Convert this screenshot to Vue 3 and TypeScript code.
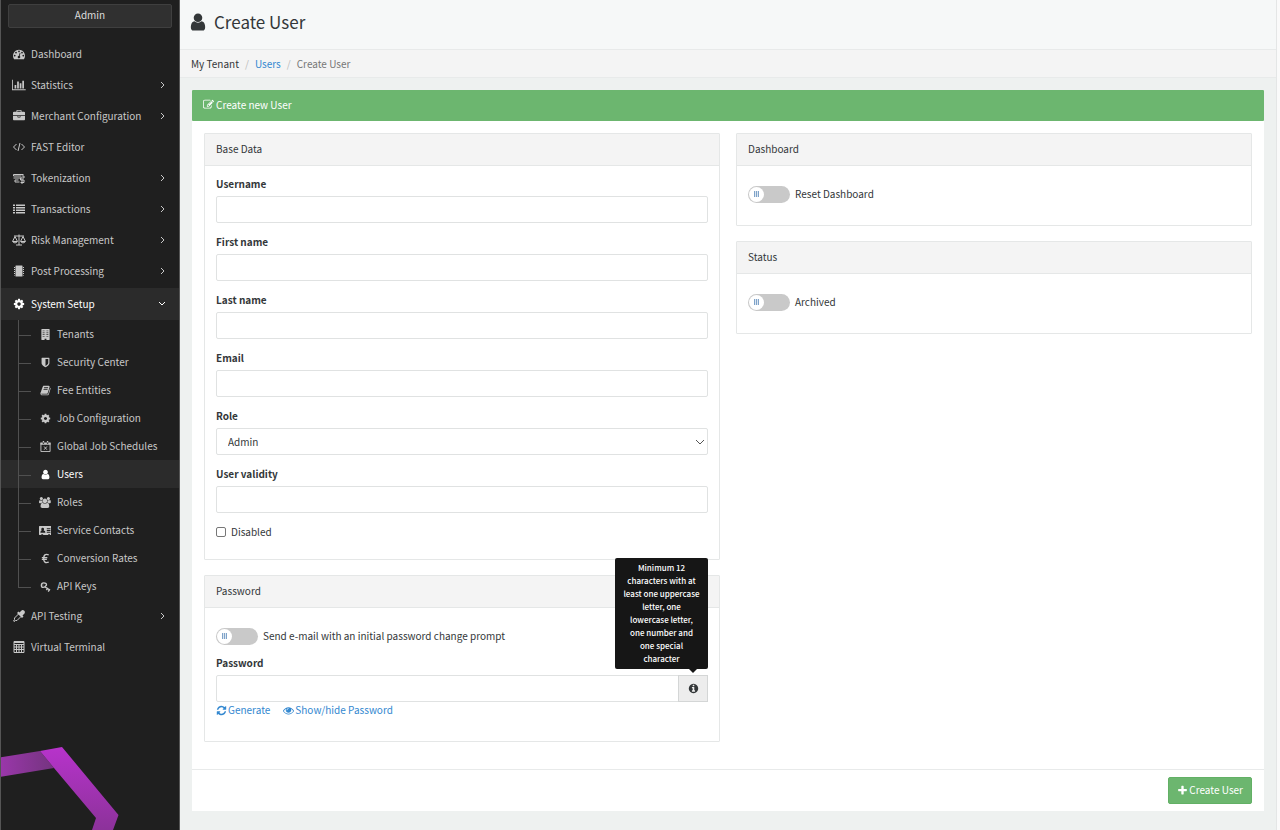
<script setup lang="ts">
import { h, ref } from 'vue'

interface Icon {
  box: string
  fill?: string
  stroke?: string
  width?: number
}

interface NavItem {
  label: string
  icon: string
  expandable?: boolean
}

const icons: Record<string, Icon> = {
  gauge: {
    box: '0 0 1792 1792',
    fill: 'M384 1152q0-53-37.5-90.5t-90.5-37.5-90.5 37.5-37.5 90.5 37.5 90.5 90.5 37.5 90.5-37.5 37.5-90.5zm192-448q0-53-37.5-90.5t-90.5-37.5-90.5 37.5-37.5 90.5 37.5 90.5 90.5 37.5 90.5-37.5 37.5-90.5zm428 481l101-382q6-26-7.5-48.5t-38.5-29.5-48 6.5-30 39.5l-101 382q-60 5-107 43.5t-63 98.5q-20 77 20 146t117 89 146-20 89-117q16-60-6-117t-72-91zm660-33q0-53-37.5-90.5t-90.5-37.5-90.5 37.5-37.5 90.5 37.5 90.5 90.5 37.5 90.5-37.5 37.5-90.5zm-640-640q0-53-37.5-90.5t-90.5-37.5-90.5 37.5-37.5 90.5 37.5 90.5 90.5 37.5 90.5-37.5 37.5-90.5zm448 192q0-53-37.5-90.5t-90.5-37.5-90.5 37.5-37.5 90.5 37.5 90.5 90.5 37.5 90.5-37.5 37.5-90.5zm320 448q0 261-141 483-19 29-54 29h-1402q-35 0-54-29-141-221-141-483 0-182 71-348t191-286 286-191 348-71 348 71 286 191 191 286 71 348z',
  },
  chart: {
    box: '0 0 2048 1792',
    fill: 'M640 896v512h-256v-512h256zm384-512v1024h-256v-1024h256zm1024 1152v128h-2048v-1536h128v1408h1920zm-640-896v768h-256v-768h256zm384-384v1152h-256v-1152h256z',
  },
  briefcase: {
    box: '0 0 1792 1792',
    fill: 'M640 256h512v-128h-512v128zm1152 640v480q0 66-47 113t-113 47h-1472q-66 0-113-47t-47-113v-480h672v160q0 26 19 45t45 19h320q26 0 45-19t19-45v-160h672zm-768 0v128h-256v-128h256zm768-480v384h-1792v-384q0-66 47-113t113-47h352v-160q0-40 28-68t68-28h576q40 0 68 28t28 68v160h352q66 0 113 47t47 113z',
  },
  code: { box: '0 0 24 24', stroke: 'M7 6L1 12L7 18M17 6l6 6L17 18M14 4l-4 16', width: 2 },
  token: {
    box: '0 0 24 24',
    stroke: 'M1 5H21M1 5v3H17M1 12H17M4 16H11M4 16v4H13M18 8h4v4h-7v4h7v5h-7M18 14v10',
    width: 2,
  },
  list: {
    box: '0 0 24 24',
    fill: 'M0 3h4v3H0zM0 8h4v3H0zM0 13h4v3H0zM0 18h4v3H0zM6 3h18v3H6zM6 8h18v3H6zM6 13h18v3H6zM6 18h18v3H6z',
  },
  scale: {
    box: '0 0 28 24',
    stroke: 'M4 4H24M14 1V22M8 22H20M6 5L1 15H11L6 5M22 5l-5 10h10L22 5M2 16q4 4 8 0M18 16q4 4 8 0',
    width: 2,
  },
  chip: {
    box: '0 0 24 24',
    fill: 'M6 1h12q1 0 1 1v20q0 1-1 1H6q-1 0-1-1V2q0-1 1-1zM2 4h2v2H2zM2 8h2v2H2zM2 12h2v2H2zM2 16h2v2H2zM2 20h2v1H2zM20 4h2v2h-2zM20 8h2v2h-2zM20 12h2v2h-2zM20 16h2v2h-2zM20 20h2v1h-2z',
  },
  cog: {
    box: '0 0 1792 1792',
    fill: 'M1152 896q0-106-75-181t-181-75-181 75-75 181 75 181 181 75 181-75 75-181zm512-109v222q0 12-8 23t-20 13l-185 28q-19 54-39 91 35 50 107 138 10 12 10 25t-9 23q-27 37-99 108t-94 71q-12 0-26-9l-138-108q-44 23-91 38-16 136-29 186-7 28-36 28h-222q-14 0-24.5-8.5t-11.5-21.5l-28-184q-49-16-90-37l-141 107q-10 9-25 9-14 0-25-11-126-114-165-168-7-10-7-23 0-12 8-23 15-21 51-66.5t54-70.5q-27-50-41-99l-183-27q-13-2-21-12.5t-8-23.5v-222q0-12 8-23t19-13l186-28q14-46 39-92-40-57-107-138-10-12-10-24 0-10 9-23 26-36 98.5-107.5t94.5-71.5q13 0 26 10l138 107q44-23 91-38 16-136 29-186 7-28 36-28h222q14 0 24.5 8.5t11.5 21.5l28 184q49 16 90 37l142-107q9-9 24-9 13 0 25 10 129 119 165 170 7 8 7 22 0 12-8 23-15 21-51 66.5t-54 70.5q26 50 41 98l183 28q13 2 21 12.5t8 23.5z',
  },
  building: {
    box: '0 0 24 24',
    fill: 'M4 0h16q1 0 1 1v22q0 1-1 1h-6v-3h-4v3H4q-1 0-1-1V1q0-1 1-1zM6 3v2h2V3zM10 3v2h1V3zM13 3v2h1V3zM16 3v2h2V3zM6 7v2h2V7zM10 7v2h1V7zM13 7v2h1V7zM16 7v2h2V7zM6 11v2h2v-2zM10 11v2h1v-2zM13 11v2h1v-2zM16 11v2h2v-2zM6 15v2h2v-2zM10 15v2h1v-2zM13 15v2h1v-2zM16 15v2h2v-2z',
  },
  shield: {
    box: '0 0 1792 1792',
    fill: 'M1344 960v-640h-448v1137q119-63 213-137 235-184 235-360zm192-768v768q0 86-33.5 170.5t-83 150-118 127.5-126.5 103-121 77.5-89.5 49.5-42.5 20q-12 6-26 6t-26-6q-16-7-42.5-20t-89.5-49.5-121-77.5-126.5-103-118-127.5-83-150-33.5-170.5v-768q0-26 19-45t45-19h1152q26 0 45 19t19 45z',
  },
  book: {
    box: '0 0 1792 1792',
    fill: 'M1703 478q40 57 18 129l-275 906q-19 64-76.5 107.5t-122.5 43.5h-923q-77 0-148.5-53.5t-99.5-131.5q-24-67-2-127 0-4 3-27t4-37q1-8-3-21.5t-3-19.5q2-11 8-21t16.5-23.5 16.5-23.5q23-38 45-91.5t30-91.5q3-10 .5-30t-.5-28q3-11 17-28t17-23q21-36 42-92t25-90q1-9-2.5-32t.5-28q4-13 22-30.5t22-22.5q19-26 42.5-84.5t27.5-96.5q1-8-3-25.5t-2-26.5q2-8 9-18t18-23 17-21q8-12 16.5-30.5t15-35 16-36 19.5-32 26.5-23.5 36-11.5 47.5 5.5l-1 3q38-9 51-9h761q74 0 114 56t18 130l-274 906q-36 119-71.5 153.5t-128.5 34.5h-869q-27 0-38 15-11 16-1 43 24 70 144 70h923q29 0 56-15.5t35-41.5l300-987q7-22 5-57 38 15 59 43zm-1064 2q-4 13 2 22.5t20 9.5h608q13 0 25.5-9.5t16.5-22.5l21-64q4-13-2-22.5t-20-9.5h-608q-13 0-25.5 9.5t-16.5 22.5zm-83 256q-4 13 2 22.5t20 9.5h608q13 0 25.5-9.5t16.5-22.5l21-64q4-13-2-22.5t-20-9.5h-608q-13 0-25.5 9.5t-16.5 22.5z',
  },
  calendar: {
    box: '0 0 24 24',
    fill: 'M6 0h3v6H6zM15 0h3v6h-3zM1 3h22v5H1z',
    stroke: 'M2 4V23H22V4M9 12l6 7M15 12l-6 7',
    width: 2,
  },
  user: {
    box: '0 0 1792 1792',
    fill: 'M1536 1399q0 109-62.5 187t-150.5 78h-854q-88 0-150.5-78t-62.5-187q0-85 8.5-160.5t31.5-152 58.5-131 94-89 134.5-34.5q131 128 313 128t313-128q76 0 134.5 34.5t94 89 58.5 131 31.5 152 8.5 160.5zm-256-887q0 159-112.5 271.5t-271.5 112.5-271.5-112.5-112.5-271.5 112.5-271.5 271.5-112.5 271.5 112.5 112.5 271.5z',
  },
  users: {
    box: '0 0 1920 1792',
    fill: 'M593 896q-162 5-265 128h-134q-82 0-138-40.5t-56-118.5q0-353 124-353 6 0 43.5 21t97.5 42.5 119 21.5q67 0 133-23-5 37-5 66 0 159 93 283zm1071 637q0 120-73 189.5t-194 69.5h-874q-121 0-194-69.5t-73-189.5q0-53 3.5-103.5t14-109 26.5-108.5 43-97.5 62-81 85.5-53.5 111.5-20q10 0 43 21.5t73 48 107 48 135 21.5 135-21.5 107-48 73-48 43-21.5q61 0 111.5 20t85.5 53.5 62 81 43 97.5 26.5 108.5 14 109 3.5 103.5zm-1024-1277q0 106-75 181t-181 75-181-75-75-181 75-181 181-75 181 75 75 181zm704 384q0 159-112.5 271.5t-271.5 112.5-271.5-112.5-112.5-271.5 112.5-271.5 271.5-112.5 271.5 112.5 112.5 271.5zm576 225q0 78-56 118.5t-138 40.5h-134q-103-123-265-128 93-124 93-283 0-29-5-66 66 23 133 23 59 0 119-21.5t97.5-42.5 43.5-21q124 0 124 353zm-128-609q0 106-75 181t-181 75-181-75-75-181 75-181 181-75 181 75 75 181z',
  },
  card: {
    box: '0 0 28 24',
    fill: 'M1 2h26q1 0 1 1v18q0 1-1 1h-3v-2h-4v2H9v-2H5v2H1q-1 0-1-1V3q0-1 1-1zM8 6a3 3 0 0 0-3 3q0 2 1 3Q3 12 3 17h11q0-5-4-5Q11 11 11 9a3 3 0 0 0-3-3zM17 7v2h8V7zM17 11v2h8v-2zM17 15v2h8v-2z',
  },
  euro: { box: '0 0 24 24', stroke: 'M19 4Q8 0 8 12t11 8M4 10H16M4 14H15', width: 3 },
  key: {
    box: '0 0 24 24',
    stroke: 'M8 4a5 5 0 0 0-5 5q0 5 4 5t7-5q1-5-6-5zM11 13l11 7M6 9h1M17 15l-3 5M21 18l-3 5',
    width: 3,
  },
  dropper: {
    box: '0 0 24 24',
    fill: 'M16 2q3-3 6-1t1 6l-4 4 2 2-3 3L8 6l3-3 2 2z',
    stroke: 'M11 8l-8 8v3l-2 3 1 1 3-2h3l8-8',
    width: 2,
  },
  calculator: {
    box: '0 0 24 24',
    stroke: 'M2 1H22V23H2zM2 7H22M2 12H22M2 17H22M7 7V23M12 7V23M17 7V23M2 3H22',
    width: 2,
  },
  pencil: {
    box: '0 0 1792 1792',
    fill: 'M888 1184l116-116-152-152-116 116v56h96v96h56zm440-720q-16-16-33 1l-350 350q-17 17-1 33t33-1l350-350q17-17 1-33zm80 594v190q0 119-84.5 203.5t-203.5 84.5h-832q-119 0-203.5-84.5t-84.5-203.5v-832q0-119 84.5-203.5t203.5-84.5h832q63 0 117 25 15 7 18 23 3 17-9 29l-49 49q-14 14-32 8-23-6-45-6h-832q-66 0-113 47t-47 113v832q0 66 47 113t113 47h832q66 0 113-47t47-113v-126q0-13 9-22l64-64q15-15 35-7t20 29zm-96-738l288 288-672 672h-288v-288zm444 132l-92 92-288-288 92-92q28-28 68-28t68 28l152 152q28 28 28 68t-28 68z',
  },
  refresh: {
    box: '0 0 1792 1792',
    fill: 'M1639 1056q0 5-1 7-64 268-268 434.5t-478 166.5q-146 0-282.5-55t-243.5-157l-129 129q-19 19-45 19t-45-19-19-45v-448q0-26 19-45t45-19h448q26 0 45 19t19 45-19 45l-137 137q71 66 161 102t187 36q134 0 250-65t186-179q11-17 53-117 8-23 30-23h192q13 0 22.5 9.5t9.5 22.5zm25-800v448q0 26-19 45t-45 19h-448q-26 0-45-19t-19-45 19-45l138-138q-148-137-349-137-134 0-250 65t-186 179q-11 17-53 117-8 23-30 23h-199q-13 0-22.5-9.5t-9.5-22.5v-7q65-268 270-434.5t480-166.5q146 0 284 55.5t245 156.5l130-129q19-19 45-19t45 19 19 45z',
  },
  eye: {
    box: '0 0 1792 1792',
    fill: 'M1664 960q-152-236-381-353 61 104 61 225 0 185-131.5 316.5t-316.5 131.5-316.5-131.5-131.5-316.5q0-121 61-225-229 117-381 353 133 205 333.5 326.5t434.5 121.5 434.5-121.5 333.5-326.5zm-720-384q0-20-14-34t-34-14q-125 0-214.5 89.5t-89.5 214.5q0 20 14 34t34 14 34-14 14-34q0-86 61-147t147-61q20 0 34-14t14-34zm848 384q0 34-20 69-140 230-376.5 368.5t-499.5 138.5-499.5-139-376.5-368q-20-35-20-69t20-69q140-229 376.5-368t499.5-139 499.5 139 376.5 368q20 35 20 69z',
  },
  info: {
    box: '0 0 1792 1792',
    fill: 'M1152 1376v-160q0-14-9-23t-23-9h-96v-512q0-14-9-23t-23-9h-320q-14 0-23 9t-9 23v160q0 14 9 23t23 9h96v320h-96q-14 0-23 9t-9 23v160q0 14 9 23t23 9h448q14 0 23-9t9-23zm-128-896v-160q0-14-9-23t-23-9h-192q-14 0-23 9t-9 23v160q0 14 9 23t23 9h192q14 0 23-9t9-23zm640 416q0 209-103 385.5t-279.5 279.5-385.5 103-385.5-103-279.5-279.5-103-385.5 103-385.5 279.5-279.5 385.5-103 385.5 103 279.5 279.5 103 385.5z',
  },
  plus: {
    box: '0 0 1792 1792',
    fill: 'M1600 736v192q0 40-28 68t-68 28h-416v416q0 40-28 68t-68 28h-192q-40 0-68-28t-28-68v-416h-416q-40 0-68-28t-28-68v-192q0-40 28-68t68-28h416v-416q0-40 28-68t68-28h192q40 0 68 28t28 68v416h416q40 0 68 28t28 68z',
  },
}

const topNav: NavItem[] = [
  { label: 'Dashboard', icon: 'gauge' },
  { label: 'Statistics', icon: 'chart', expandable: true },
  { label: 'Merchant Configuration', icon: 'briefcase', expandable: true },
  { label: 'FAST Editor', icon: 'code' },
  { label: 'Tokenization', icon: 'token', expandable: true },
  { label: 'Transactions', icon: 'list', expandable: true },
  { label: 'Risk Management', icon: 'scale', expandable: true },
  { label: 'Post Processing', icon: 'chip', expandable: true },
]

const setupNav: NavItem[] = [
  { label: 'Tenants', icon: 'building' },
  { label: 'Security Center', icon: 'shield' },
  { label: 'Fee Entities', icon: 'book' },
  { label: 'Job Configuration', icon: 'cog' },
  { label: 'Global Job Schedules', icon: 'calendar' },
  { label: 'Users', icon: 'user' },
  { label: 'Roles', icon: 'users' },
  { label: 'Service Contacts', icon: 'card' },
  { label: 'Conversion Rates', icon: 'euro' },
  { label: 'API Keys', icon: 'key' },
]

const bottomNav: NavItem[] = [
  { label: 'API Testing', icon: 'dropper', expandable: true },
  { label: 'Virtual Terminal', icon: 'calculator' },
]

const textFields = ref([
  { id: 'username', label: 'Username', value: '' },
  { id: 'first-name', label: 'First name', value: '' },
  { id: 'last-name', label: 'Last name', value: '' },
  { id: 'email', label: 'Email', value: '' },
])
const role = ref('Admin')
const validity = ref('')
const disabled = ref(false)
const sendMail = ref(false)
const resetDashboard = ref(false)
const archived = ref(false)
const password = ref('')
const showPassword = ref(false)

function generate() {
  password.value = Math.random().toString(36).slice(2, 14)
}

const Glyph = (props: { name: string }) => {
  const icon = icons[props.name]
  return h('svg', { viewBox: icon.box, class: 'glyph', 'aria-hidden': 'true' }, [
    icon.fill ? h('path', { d: icon.fill, fill: 'currentColor', 'fill-rule': 'evenodd' }) : null,
    icon.stroke
      ? h('path', { d: icon.stroke, fill: 'none', stroke: 'currentColor', 'stroke-width': icon.width })
      : null,
  ])
}
Glyph.props = ['name']
</script>

<template>
  <div class="app">
    <aside class="sidebar">
      <button class="account" type="button">Admin</button>
      <nav aria-label="Main">
        <ul class="menu">
          <li v-for="item in topNav" :key="item.label">
            <a href="#" class="link">
              <span class="icon"><Glyph :name="item.icon" /></span>
              <span class="text">{{ item.label }}</span>
              <svg v-if="item.expandable" class="chevron" viewBox="0 0 6 6"><path d="M2 0L5 3L2 6" /></svg>
            </a>
          </li>
          <li class="group">
            <a href="#" class="link open">
              <span class="icon"><Glyph name="cog" /></span>
              <span class="text">System Setup</span>
              <svg class="chevron" viewBox="0 0 6 6"><path d="M0 1L3 4L6 1" /></svg>
            </a>
            <ul class="submenu">
              <li v-for="item in setupNav" :key="item.label">
                <a href="#" class="sublink" :class="{ active: item.label === 'Users' }">
                  <span class="icon"><Glyph :name="item.icon" /></span>
                  <span class="text">{{ item.label }}</span>
                </a>
              </li>
            </ul>
          </li>
          <li v-for="item in bottomNav" :key="item.label">
            <a href="#" class="link">
              <span class="icon"><Glyph :name="item.icon" /></span>
              <span class="text">{{ item.label }}</span>
              <svg v-if="item.expandable" class="chevron" viewBox="0 0 6 6"><path d="M2 0L5 3L2 6" /></svg>
            </a>
          </li>
        </ul>
      </nav>
      <svg class="brand" viewBox="1 0 118 84" aria-hidden="true">
        <defs>
          <linearGradient id="band" x1="0" y1="0" x2="1" y2="0">
            <stop offset="0" stop-color="#9a37aa" />
            <stop offset="1" stop-color="#74347f" />
          </linearGradient>
          <linearGradient id="edge" x1="0" y1="0" x2="0" y2="1">
            <stop offset="0" stop-color="#b733cb" />
            <stop offset="1" stop-color="#8c329a" />
          </linearGradient>
        </defs>
        <path d="M0 11.5L40 5L54 22L0 31z" fill="url(#band)" />
        <path d="M40 5L62 1L118.500 69L113 84H92L96 72L54 22z" fill="url(#edge)" />
      </svg>
    </aside>

    <main class="main">
      <header class="title-bar">
        <Glyph name="user" />
        <h1>Create User</h1>
      </header>
      <nav class="crumbs" aria-label="Breadcrumb">
        <span class="tenant">My Tenant</span>
        <span class="slash">/</span>
        <a href="#">Users</a>
        <span class="slash">/</span>
        <span class="current">Create User</span>
      </nav>

      <form class="panel" @submit.prevent>
        <h2 class="panel-title"><Glyph name="pencil" />Create new User</h2>
        <div class="columns">
          <div class="column">
            <section class="card">
              <h3>Base Data</h3>
              <div class="card-body">
                <div v-for="field in textFields" :key="field.id" class="field">
                  <label :for="field.id">{{ field.label }}</label>
                  <input :id="field.id" v-model="field.value" type="text" />
                </div>
                <div class="field">
                  <label for="role">Role</label>
                  <div class="select">
                    <select id="role" v-model="role">
                      <option>Admin</option>
                    </select>
                    <svg viewBox="0 0 10 6" aria-hidden="true"><path d="M1 1l4 4l4-4" /></svg>
                  </div>
                </div>
                <div class="field">
                  <label for="validity">User validity</label>
                  <input id="validity" v-model="validity" type="text" />
                </div>
                <label class="check"><input v-model="disabled" type="checkbox" />Disabled</label>
              </div>
            </section>

            <section class="card">
              <h3>Password</h3>
              <div class="card-body secret">
                <label class="switch"><input v-model="sendMail" type="checkbox" role="switch" />Send e-mail with an initial password change prompt</label>
                <div class="field">
                  <label for="password">Password</label>
                  <div class="input-group">
                    <input id="password" v-model="password" :type="showPassword ? 'text' : 'password'" />
                    <button type="button" class="addon" aria-label="Password rules" aria-describedby="rules">
                      <Glyph name="info" />
                    </button>
                    <div id="rules" class="tooltip" role="tooltip">
                      Minimum 12 characters with at least one uppercase letter, one lowercase letter, one number and one special character
                    </div>
                  </div>
                </div>
                <div class="actions">
                  <a href="#" @click.prevent="generate"><Glyph name="refresh" />Generate</a>
                  <a href="#" @click.prevent="showPassword = !showPassword"><Glyph name="eye" />Show/hide Password</a>
                </div>
              </div>
            </section>
          </div>

          <div class="column">
            <section class="card">
              <h3>Dashboard</h3>
              <div class="card-body option">
                <label class="switch"><input v-model="resetDashboard" type="checkbox" role="switch" />Reset Dashboard</label>
              </div>
            </section>
            <section class="card">
              <h3>Status</h3>
              <div class="card-body option">
                <label class="switch"><input v-model="archived" type="checkbox" role="switch" />Archived</label>
              </div>
            </section>
          </div>
        </div>
        <footer>
          <button class="submit" type="submit"><Glyph name="plus" />Create User</button>
        </footer>
      </form>
    </main>
  </div>
</template>

<style>
body {
  margin: 0;
  background: #fafafa;
}
</style>

<style scoped>
.app {
  display: flex;
  min-height: 100vh;
  font-family: 'Noto Sans CJK SC', 'Open Sans', sans-serif;
  font-size: 10px;
  line-height: 18px;
  color: #333739;
}
.app * {
  box-sizing: border-box;
}
ul {
  margin: 0;
  padding: 0;
  list-style: none;
}
h1,
h2,
h3 {
  margin: 0;
  font-size: inherit;
  font-weight: 400;
}
a {
  color: #3388d0;
  text-decoration: none;
}
button,
input,
select {
  font: inherit;
  color: inherit;
}
.glyph {
  display: block;
  height: 11px;
  flex: none;
}

/* Sidebar */
.sidebar {
  flex: 0 0 180px;
  display: flex;
  flex-direction: column;
  background: #1f1f1f;
  border: solid #555;
  border-width: 0 1px;
}
.account {
  display: block;
  height: 24px;
  margin: 4px 7px 10px;
  padding: 0 0 2px;
  border: 1px solid #3f3f3f;
  border-radius: 2px;
  background: #303030;
  color: #ddd;
}
.link,
.sublink {
  display: flex;
  align-items: center;
  color: #c8c8c8;
}
.link {
  height: 31px;
  padding: 0 14px 0 8px;
}
.icon {
  display: flex;
  justify-content: center;
  width: 20px;
}
.icon .glyph {
  height: 12px;
}
.text {
  flex: 1;
  margin-left: 2px;
}
.chevron {
  width: 6px;
  height: 6px;
  overflow: visible;
  fill: none;
  stroke: currentColor;
  stroke-width: 1;
}
.group {
  padding-top: 2px;
}
.link.open,
.sublink.active {
  background: #2b2b2b;
  color: #fff;
}
.link.open {
  height: 32px;
}
.sublink {
  height: 28px;
  padding-left: 34px;
}
.submenu .glyph {
  height: 11px;
}
.submenu li {
  position: relative;
}
.submenu li::before {
  content: '';
  position: absolute;
  z-index: 1;
  left: 17px;
  top: 0;
  width: 12px;
  height: 15px;
  border-left: 1px solid #505050;
  border-bottom: 1px solid #505050;
}
.submenu li:not(:last-child)::after {
  content: '';
  position: absolute;
  z-index: 1;
  left: 17px;
  top: 15px;
  bottom: 0;
  border-left: 1px solid #505050;
}
.brand {
  display: block;
  width: 118px;
  height: 84px;
  margin-top: auto;
}

/* Page */
.main {
  flex: 1;
  min-width: 0;
  display: flex;
  flex-direction: column;
  margin-right: 3px;
  background: #eef1f0;
  border-right: 1px solid #e4e6e6;
}
.title-bar {
  display: flex;
  align-items: center;
  gap: 6px;
  height: 50px;
  padding: 0 8px 6px;
  background: #f6f8f8;
  border-bottom: 1px solid #e8eaea;
}
.title-bar .glyph {
  height: 20px;
}
.title-bar h1 {
  font-size: 17px;
  line-height: 24px;
}
.crumbs {
  display: flex;
  align-items: center;
  gap: 6px;
  height: 28px;
  padding: 0 11px;
  background: #f4f4f4;
  border-bottom: 1px solid #e8eaea;
}
.slash {
  color: #bbb;
}
.current {
  color: #777;
}

.panel {
  flex: 1;
  display: flex;
  flex-direction: column;
  margin: 12px 12px 19px;
  background: #fff;
}
.panel-title {
  display: flex;
  align-items: center;
  gap: 2px;
  height: 31px;
  padding: 0 11px 2px;
  border-radius: 1px;
  background: #6cb66f;
  color: #fff;
}
.columns {
  flex: 1;
  display: grid;
  grid-template-columns: 1fr 1fr;
  align-items: start;
  gap: 16px;
  padding: 12px 12px 27px;
}
.column {
  display: grid;
  gap: 15px;
}
.card {
  border: 1px solid #e5e7e7;
  border-radius: 1px;
}
.card h3 {
  height: 32px;
  padding: 0 11px;
  line-height: 30px;
  background: #f4f4f4;
  border-bottom: 1px solid #e5e7e7;
}
.card-body {
  display: flex;
  flex-direction: column;
  gap: 10px;
  padding: 9px 11px 18px;
}
.field {
  display: flex;
  flex-direction: column;
  gap: 3px;
}
.field label {
  font-weight: 700;
}
.field input,
.select select {
  width: 100%;
  height: 27px;
  padding: 0 11px;
  border: 1px solid #e0e2e2;
  border-radius: 2px;
  background: #fff;
  outline: 0;
}
.select {
  display: grid;
  align-items: center;
}
.select select {
  grid-area: 1 / 1;
  appearance: none;
}
.select svg {
  grid-area: 1 / 1;
  justify-self: end;
  width: 10px;
  height: 6px;
  margin-right: 3px;
  fill: none;
  stroke: #555;
  pointer-events: none;
}
.check {
  display: flex;
  align-items: center;
  gap: 5px;
}
.check input {
  appearance: none;
  width: 10px;
  height: 10px;
  margin: 0;
  border: 1px solid #777;
  border-radius: 2px;
  background: #fff;
}
.check input:checked {
  background: #3388d0;
}
.switch {
  display: flex;
  align-items: center;
  gap: 5px;
}
.switch input {
  appearance: none;
  display: flex;
  width: 42px;
  height: 17px;
  margin: 0;
  padding: 1px;
  border-radius: 9px;
  background: #c9c9c9;
}
.switch input::before {
  content: '';
  width: 15px;
  height: 15px;
  border-radius: 50%;
  background: repeating-linear-gradient(90deg, #7fa3c9 0 1px, #dde7f1 1px 2px) center / 5px 6px no-repeat #fff;
}
.switch input:checked {
  justify-content: flex-end;
  background: #6cb66f;
}
.card-body.option {
  padding: 19px 11px 22px;
}
.card-body.secret {
  gap: 9px;
  padding: 19px 11px 22px;
}
.input-group {
  position: relative;
  display: flex;
}
.input-group input {
  flex: 1;
  min-width: 0;
  border-radius: 2px 0 0 2px;
}
.addon {
  display: flex;
  align-items: center;
  justify-content: center;
  width: 30px;
  padding: 0;
  margin-left: -1px;
  border: 1px solid #d4d6d6;
  background: #ededed;
}
.tooltip {
  position: absolute;
  right: 0;
  bottom: calc(100% + 6px);
  width: 93px;
  padding: 3px 8px 4px;
  border-radius: 2px;
  background: #161616;
  color: #fff;
  font-size: 8px;
  font-weight: 500;
  line-height: 13px;
  text-align: center;
}
.tooltip::after {
  content: '';
  position: absolute;
  top: 100%;
  right: 11px;
  border: 4px solid transparent;
  border-top-color: #161616;
  border-bottom: 0;
}
.actions {
  display: flex;
  gap: 13px;
  margin-top: -10px;
}
.actions a {
  display: flex;
  align-items: center;
  gap: 1px;
}
footer {
  display: flex;
  justify-content: flex-end;
  padding: 7px 12px;
  border-top: 1px solid #e8eaea;
}
.submit {
  display: flex;
  align-items: center;
  gap: 1px;
  height: 27px;
  padding: 0 8px 1px;
  border: 1px solid #62b065;
  border-radius: 2px;
  background: #6cb66f;
  color: #fff;
}
</style>
